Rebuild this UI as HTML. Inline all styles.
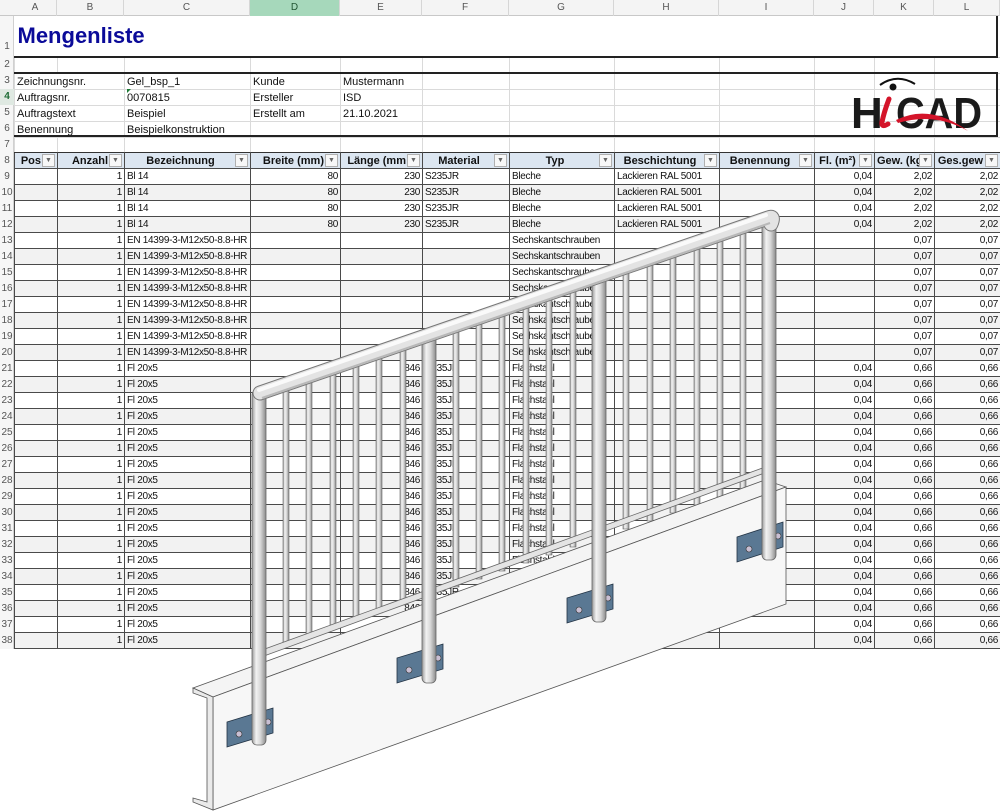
<!DOCTYPE html>
<html><head><meta charset="utf-8"><style>
*{margin:0;padding:0;box-sizing:border-box}
body{width:1000px;height:811px;overflow:hidden;background:#fff;font-family:"Liberation Sans",Arial,sans-serif;position:relative}
.abs{position:absolute}
#colh{left:0;top:0;width:1000px;height:16px;background:#f4f4f4;border-bottom:1px solid #c8c8c8;display:flex;padding-left:14px}
#colh div{height:16px;border-right:1px solid #d6d6d6;font-size:10px;color:#555;text-align:center;line-height:16px}
#rowh{left:0;top:16px;width:14px;height:633px;background:#f6f6f6;border-right:1px solid #d0d0d0}
.rn{position:absolute;left:0;width:14px;font-size:10px;color:#555;text-align:center}
table{border-collapse:collapse;table-layout:fixed;position:absolute;left:14px}
td{overflow:hidden;white-space:nowrap;padding:0 2px;font-size:10px;color:#111}
#top td{border:1px solid #dadada;font-size:11px;vertical-align:bottom;line-height:14px}
#data tr{height:16px}
#data td{border:1px solid #4a4a4a;line-height:14px;letter-spacing:-0.3px}
#data tr:nth-child(odd) td{background:#f2f2f2}
#data tr.h td{background:#dce6f1;font-weight:bold;font-size:11px;position:relative;padding-right:16px;letter-spacing:0;border-top:1px solid #333}
.fb{position:absolute;right:2px;top:1px;width:13px;height:13px;border:1px solid #b0b0b0;background:#f7f7f7;font-size:7px;color:#666;text-align:center;line-height:12px;font-weight:normal}
.r{text-align:right}.c{text-align:center}
</style></head><body>
<div id="colh" class="abs">
<div style="width:43px">A</div><div style="width:67px">B</div><div style="width:126px">C</div><div style="width:90px;background:#a6d8bb;color:#225533">D</div><div style="width:82px">E</div><div style="width:87px">F</div><div style="width:105px">G</div><div style="width:105px">H</div><div style="width:95px">I</div><div style="width:60px">J</div><div style="width:60px">K</div><div style="width:66px">L</div>
</div>
<div id="rowh" class="abs"></div>
<div class="abs" style="left:0;top:89px;width:14px;height:16px;background:#dfe9e2"></div>
<div class="rn" style="top:41px">1</div><div class="rn" style="top:59px">2</div><div class="rn" style="top:75px">3</div><div class="rn" style="top:91px;color:#1d6b34;font-weight:bold">4</div><div class="rn" style="top:107px">5</div><div class="rn" style="top:123px">6</div><div class="rn" style="top:139px">7</div><div class="rn" style="top:155px">8</div>
<div class="rn" style="top:171px">9</div><div class="rn" style="top:187px">10</div><div class="rn" style="top:203px">11</div><div class="rn" style="top:219px">12</div><div class="rn" style="top:235px">13</div><div class="rn" style="top:251px">14</div><div class="rn" style="top:267px">15</div><div class="rn" style="top:283px">16</div><div class="rn" style="top:299px">17</div><div class="rn" style="top:315px">18</div><div class="rn" style="top:331px">19</div><div class="rn" style="top:347px">20</div><div class="rn" style="top:363px">21</div><div class="rn" style="top:379px">22</div><div class="rn" style="top:395px">23</div><div class="rn" style="top:411px">24</div><div class="rn" style="top:427px">25</div><div class="rn" style="top:443px">26</div><div class="rn" style="top:459px">27</div><div class="rn" style="top:475px">28</div><div class="rn" style="top:491px">29</div><div class="rn" style="top:507px">30</div><div class="rn" style="top:523px">31</div><div class="rn" style="top:539px">32</div><div class="rn" style="top:555px">33</div><div class="rn" style="top:571px">34</div><div class="rn" style="top:587px">35</div><div class="rn" style="top:603px">36</div><div class="rn" style="top:619px">37</div><div class="rn" style="top:635px">38</div>

<table id="top" style="top:16px;width:986px">
<colgroup><col style="width:43px"><col style="width:67px"><col style="width:126px"><col style="width:90px"><col style="width:82px"><col style="width:87px"><col style="width:105px"><col style="width:105px"><col style="width:95px"><col style="width:60px"><col style="width:60px"><col style="width:66px"></colgroup>
<tr style="height:41px"><td colspan="12" style="border:none;font-size:22px;font-weight:bold;color:#0b0b99;vertical-align:middle;padding-left:3px;line-height:22px">Mengenliste</td></tr>
<tr style="height:16px"><td></td><td></td><td></td><td></td><td></td><td></td><td></td><td></td><td></td><td></td><td></td><td></td></tr>
<tr style="height:16px"><td colspan="2">Zeichnungsnr.</td><td>Gel_bsp_1</td><td>Kunde</td><td>Mustermann</td><td></td><td></td><td></td><td></td><td></td><td></td><td></td></tr>
<tr style="height:16px"><td colspan="2">Auftragsnr.</td><td>0070815</td><td>Ersteller</td><td>ISD</td><td></td><td></td><td></td><td></td><td></td><td></td><td></td></tr>
<tr style="height:16px"><td colspan="2">Auftragstext</td><td>Beispiel</td><td>Erstellt am</td><td>21.10.2021</td><td></td><td></td><td></td><td></td><td></td><td></td><td></td></tr>
<tr style="height:16px"><td colspan="2">Benennung</td><td>Beispielkonstruktion</td><td></td><td></td><td></td><td></td><td></td><td></td><td></td><td></td><td></td></tr>
<tr style="height:15px"><td></td><td></td><td></td><td></td><td></td><td></td><td></td><td></td><td></td><td></td><td></td><td></td></tr>
</table>
<div class="abs" style="left:14px;top:56px;width:984px;height:2px;background:#222"></div>
<div class="abs" style="left:996px;top:16px;width:2px;height:42px;background:#222"></div>
<div class="abs" style="left:14px;top:72px;width:984px;height:2px;background:#222"></div>
<div class="abs" style="left:14px;top:135px;width:984px;height:2px;background:#222"></div>
<div class="abs" style="left:996px;top:72px;width:2px;height:65px;background:#222"></div>
<div class="abs" style="left:127px;top:89px;width:0;height:0;border-top:4px solid #1d7a35;border-right:4px solid transparent"></div>

<table id="data" style="top:152px;width:986px">
<colgroup><col style="width:43px"><col style="width:67px"><col style="width:126px"><col style="width:90px"><col style="width:82px"><col style="width:87px"><col style="width:105px"><col style="width:105px"><col style="width:95px"><col style="width:60px"><col style="width:60px"><col style="width:66px"></colgroup>
<tr class="h"><td class="r">Pos<span class="fb">▼</span></td><td class="r">Anzahl<span class="fb">▼</span></td><td class="c">Bezeichnung<span class="fb">▼</span></td><td class="r">Breite (mm)<span class="fb">▼</span></td><td class="r">Länge (mm<span class="fb">▼</span></td><td class="c">Material<span class="fb">▼</span></td><td class="c">Typ<span class="fb">▼</span></td><td class="c">Beschichtung<span class="fb">▼</span></td><td class="c">Benennung<span class="fb">▼</span></td><td class="c">Fl. (m²)<span class="fb">▼</span></td><td class="c">Gew. (kg<span class="fb">▼</span></td><td class="c">Ges.gew<span class="fb">▼</span></td></tr>
<tr><td></td><td class="r">1</td><td>Bl 14</td><td class="r">80</td><td class="r">230</td><td>S235JR</td><td>Bleche</td><td>Lackieren RAL 5001</td><td></td><td class="r">0,04</td><td class="r">2,02</td><td class="r">2,02</td></tr>
<tr><td></td><td class="r">1</td><td>Bl 14</td><td class="r">80</td><td class="r">230</td><td>S235JR</td><td>Bleche</td><td>Lackieren RAL 5001</td><td></td><td class="r">0,04</td><td class="r">2,02</td><td class="r">2,02</td></tr>
<tr><td></td><td class="r">1</td><td>Bl 14</td><td class="r">80</td><td class="r">230</td><td>S235JR</td><td>Bleche</td><td>Lackieren RAL 5001</td><td></td><td class="r">0,04</td><td class="r">2,02</td><td class="r">2,02</td></tr>
<tr><td></td><td class="r">1</td><td>Bl 14</td><td class="r">80</td><td class="r">230</td><td>S235JR</td><td>Bleche</td><td>Lackieren RAL 5001</td><td></td><td class="r">0,04</td><td class="r">2,02</td><td class="r">2,02</td></tr>
<tr><td></td><td class="r">1</td><td>EN 14399-3-M12x50-8.8-HR</td><td></td><td></td><td></td><td>Sechskantschrauben</td><td></td><td></td><td></td><td class="r">0,07</td><td class="r">0,07</td></tr>
<tr><td></td><td class="r">1</td><td>EN 14399-3-M12x50-8.8-HR</td><td></td><td></td><td></td><td>Sechskantschrauben</td><td></td><td></td><td></td><td class="r">0,07</td><td class="r">0,07</td></tr>
<tr><td></td><td class="r">1</td><td>EN 14399-3-M12x50-8.8-HR</td><td></td><td></td><td></td><td>Sechskantschrauben</td><td></td><td></td><td></td><td class="r">0,07</td><td class="r">0,07</td></tr>
<tr><td></td><td class="r">1</td><td>EN 14399-3-M12x50-8.8-HR</td><td></td><td></td><td></td><td>Sechskantschrauben</td><td></td><td></td><td></td><td class="r">0,07</td><td class="r">0,07</td></tr>
<tr><td></td><td class="r">1</td><td>EN 14399-3-M12x50-8.8-HR</td><td></td><td></td><td></td><td>Sechskantschrauben</td><td></td><td></td><td></td><td class="r">0,07</td><td class="r">0,07</td></tr>
<tr><td></td><td class="r">1</td><td>EN 14399-3-M12x50-8.8-HR</td><td></td><td></td><td></td><td>Sechskantschrauben</td><td></td><td></td><td></td><td class="r">0,07</td><td class="r">0,07</td></tr>
<tr><td></td><td class="r">1</td><td>EN 14399-3-M12x50-8.8-HR</td><td></td><td></td><td></td><td>Sechskantschrauben</td><td></td><td></td><td></td><td class="r">0,07</td><td class="r">0,07</td></tr>
<tr><td></td><td class="r">1</td><td>EN 14399-3-M12x50-8.8-HR</td><td></td><td></td><td></td><td>Sechskantschrauben</td><td></td><td></td><td></td><td class="r">0,07</td><td class="r">0,07</td></tr>
<tr><td></td><td class="r">1</td><td>Fl 20x5</td><td></td><td class="r">846</td><td>S235JR</td><td>Flachstahl</td><td></td><td></td><td class="r">0,04</td><td class="r">0,66</td><td class="r">0,66</td></tr>
<tr><td></td><td class="r">1</td><td>Fl 20x5</td><td></td><td class="r">846</td><td>S235JR</td><td>Flachstahl</td><td></td><td></td><td class="r">0,04</td><td class="r">0,66</td><td class="r">0,66</td></tr>
<tr><td></td><td class="r">1</td><td>Fl 20x5</td><td></td><td class="r">846</td><td>S235JR</td><td>Flachstahl</td><td></td><td></td><td class="r">0,04</td><td class="r">0,66</td><td class="r">0,66</td></tr>
<tr><td></td><td class="r">1</td><td>Fl 20x5</td><td></td><td class="r">846</td><td>S235JR</td><td>Flachstahl</td><td></td><td></td><td class="r">0,04</td><td class="r">0,66</td><td class="r">0,66</td></tr>
<tr><td></td><td class="r">1</td><td>Fl 20x5</td><td></td><td class="r">846</td><td>S235JR</td><td>Flachstahl</td><td></td><td></td><td class="r">0,04</td><td class="r">0,66</td><td class="r">0,66</td></tr>
<tr><td></td><td class="r">1</td><td>Fl 20x5</td><td></td><td class="r">846</td><td>S235JR</td><td>Flachstahl</td><td></td><td></td><td class="r">0,04</td><td class="r">0,66</td><td class="r">0,66</td></tr>
<tr><td></td><td class="r">1</td><td>Fl 20x5</td><td></td><td class="r">846</td><td>S235JR</td><td>Flachstahl</td><td></td><td></td><td class="r">0,04</td><td class="r">0,66</td><td class="r">0,66</td></tr>
<tr><td></td><td class="r">1</td><td>Fl 20x5</td><td></td><td class="r">846</td><td>S235JR</td><td>Flachstahl</td><td></td><td></td><td class="r">0,04</td><td class="r">0,66</td><td class="r">0,66</td></tr>
<tr><td></td><td class="r">1</td><td>Fl 20x5</td><td></td><td class="r">846</td><td>S235JR</td><td>Flachstahl</td><td></td><td></td><td class="r">0,04</td><td class="r">0,66</td><td class="r">0,66</td></tr>
<tr><td></td><td class="r">1</td><td>Fl 20x5</td><td></td><td class="r">846</td><td>S235JR</td><td>Flachstahl</td><td></td><td></td><td class="r">0,04</td><td class="r">0,66</td><td class="r">0,66</td></tr>
<tr><td></td><td class="r">1</td><td>Fl 20x5</td><td></td><td class="r">846</td><td>S235JR</td><td>Flachstahl</td><td></td><td></td><td class="r">0,04</td><td class="r">0,66</td><td class="r">0,66</td></tr>
<tr><td></td><td class="r">1</td><td>Fl 20x5</td><td></td><td class="r">846</td><td>S235JR</td><td>Flachstahl</td><td></td><td></td><td class="r">0,04</td><td class="r">0,66</td><td class="r">0,66</td></tr>
<tr><td></td><td class="r">1</td><td>Fl 20x5</td><td></td><td class="r">846</td><td>S235JR</td><td>Flachstahl</td><td></td><td></td><td class="r">0,04</td><td class="r">0,66</td><td class="r">0,66</td></tr>
<tr><td></td><td class="r">1</td><td>Fl 20x5</td><td></td><td class="r">846</td><td>S235JR</td><td>Flachstahl</td><td></td><td></td><td class="r">0,04</td><td class="r">0,66</td><td class="r">0,66</td></tr>
<tr><td></td><td class="r">1</td><td>Fl 20x5</td><td></td><td class="r">846</td><td>S235JR</td><td>Flachstahl</td><td></td><td></td><td class="r">0,04</td><td class="r">0,66</td><td class="r">0,66</td></tr>
<tr><td></td><td class="r">1</td><td>Fl 20x5</td><td></td><td class="r">846</td><td>S235JR</td><td>Flachstahl</td><td></td><td></td><td class="r">0,04</td><td class="r">0,66</td><td class="r">0,66</td></tr>
<tr><td></td><td class="r">1</td><td>Fl 20x5</td><td></td><td class="r">846</td><td>S235JR</td><td>Flachstahl</td><td></td><td></td><td class="r">0,04</td><td class="r">0,66</td><td class="r">0,66</td></tr>
<tr><td></td><td class="r">1</td><td>Fl 20x5</td><td></td><td class="r">846</td><td>S235JR</td><td>Flachstahl</td><td></td><td></td><td class="r">0,04</td><td class="r">0,66</td><td class="r">0,66</td></tr>
</table>

<svg class="abs" style="left:0;top:0" width="1000" height="811" viewBox="0 0 1000 811">
<defs>
<linearGradient id="tube" x1="0" x2="1" y1="0" y2="0"><stop offset="0" stop-color="#9a9a9a"/><stop offset=".3" stop-color="#f2f2f2"/><stop offset=".6" stop-color="#d8d8d8"/><stop offset="1" stop-color="#8a8a8a"/></linearGradient>
</defs>
<g>
<path d="M880 85 Q897 73 915 84" fill="none" stroke="#111" stroke-width="2"/>
<circle cx="893" cy="87" r="3.5" fill="#111"/>
<text x="851" y="128" font-family="Liberation Sans" font-weight="bold" font-size="44" fill="#1a1a1a">H</text>
<text x="896" y="128" font-family="Liberation Sans" font-weight="bold" font-size="44" fill="#1a1a1a" textLength="86" lengthAdjust="spacingAndGlyphs">CAD</text>
<path d="M889 99 Q884 112 882 122 Q881 128 888 124" fill="none" stroke="#d4142a" stroke-width="5" stroke-linecap="round"/>
<path d="M896 120 Q930 103 968 131 Q935 112 898 123 Z" fill="#d4142a"/>
</g>
<g fill="url(#tube)" stroke="#666" stroke-width=".6">
<rect x="283" y="387" width="6" height="258"/>
<rect x="306" y="379" width="6" height="258"/>
<rect x="330" y="371" width="6" height="258"/>
<rect x="353" y="363" width="6" height="258"/>
<rect x="376" y="355" width="6" height="258"/>
<rect x="400" y="347" width="6" height="258"/>
<rect x="453" y="329" width="6" height="258"/>
<rect x="476" y="321" width="6" height="258"/>
<rect x="499" y="313" width="6" height="258"/>
<rect x="523" y="305" width="6" height="258"/>
<rect x="546" y="297" width="6" height="258"/>
<rect x="570" y="289" width="6" height="258"/>
<rect x="623" y="271" width="6" height="258"/>
<rect x="647" y="263" width="6" height="258"/>
<rect x="670" y="255" width="6" height="258"/>
<rect x="694" y="247" width="6" height="258"/>
<rect x="717" y="239" width="6" height="258"/>
<rect x="740" y="231" width="6" height="258"/>
</g>
<polygon points="262,650 768,466 770,471 264,656" fill="#e4e4e4" stroke="#666" stroke-width=".8"/>
<polygon points="193,688 765,480 786,487 213,697" fill="#f4f4f4" stroke="#555" stroke-width=".8"/>
<polygon points="213,697 786,487 786,604 213,810" fill="#f7f7f7" stroke="#555" stroke-width=".8"/>
<polygon points="193,688 213,697 213,810 193,802 193,798 207,802 207,698 193,693" fill="#eaeaea" stroke="#555" stroke-width=".8"/>
<g fill="#5a7893" stroke="#223344" stroke-width=".8">
<polygon points="227,722 273,708 273,733 227,747"/>
<polygon points="397,658 443,644 443,669 397,683"/>
<polygon points="567,598 613,584 613,609 567,623"/>
<polygon points="737,537 783,522 783,547 737,562"/>
</g>
<g fill="#c9bfd3" stroke="#333" stroke-width=".6">
<circle cx="239" cy="734" r="3"/><circle cx="268" cy="722" r="3"/>
<circle cx="409" cy="670" r="3"/><circle cx="438" cy="658" r="3"/>
<circle cx="579" cy="610" r="3"/><circle cx="608" cy="598" r="3"/>
<circle cx="749" cy="549" r="3"/><circle cx="778" cy="536" r="3"/>
</g>
<g fill="url(#tube)" stroke="#666" stroke-width=".8">
<rect x="252" y="390" width="14" height="355" rx="5"/>
<rect x="422" y="333" width="14" height="350" rx="5"/>
<rect x="592" y="274" width="14" height="348" rx="5"/>
<rect x="762" y="216" width="14" height="344" rx="5"/>
</g>
<path d="M260 393 L768 218 Q775 215 771 224" fill="none" stroke="#777" stroke-width="15" stroke-linecap="round" stroke-linejoin="round"/>
<path d="M260 393 L768 218 Q775 215 771 224" fill="none" stroke="#e3e3e3" stroke-width="13" stroke-linecap="round" stroke-linejoin="round"/>
<path d="M259 390 L766 215" fill="none" stroke="#fafafa" stroke-width="4" stroke-linecap="round"/>
<path d="M262 398 L770 223" fill="none" stroke="#b8b8b8" stroke-width="2"/>
</svg>
</body></html>
